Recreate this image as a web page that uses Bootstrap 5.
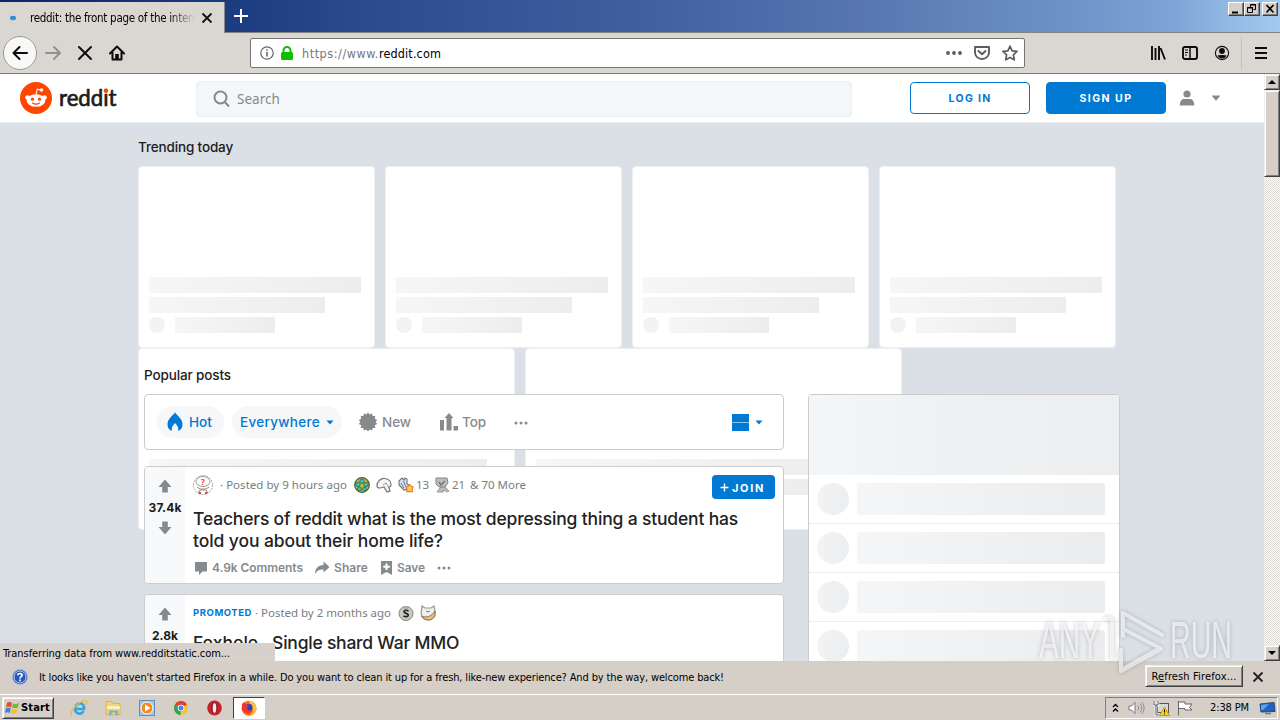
<!DOCTYPE html>
<html lang="en">
<head>
<meta charset="utf-8">
<title>reddit: the front page of the internet</title>
<link rel="stylesheet" href="https://cdn.jsdelivr.net/npm/bootstrap@5.3.0/dist/css/bootstrap.min.css">
<style>
  body { width: 1280px; height: 720px; overflow: hidden; background: #d5cfc8; color: #000;
    font: 11px/14px "DejaVu Sans Condensed", "DejaVu Sans", sans-serif; }
  svg { display: block; flex: none; }
  [data-w] { white-space: nowrap; display: inline-block; }
  /* fine spacing steps between Bootstrap's own */
  .s1 { margin-left: 1px; } .s2 { margin-left: 2px; } .s3 { margin-left: 3px; } .s5 { margin-left: 5px; }
  .s6 { margin-left: 6px; } .s7 { margin-left: 7px; } .s9 { margin-left: 9px; } .s11 { margin-left: 11px; }
  .s12 { margin-left: 12px; } .s13 { margin-left: 13px; } .s17 { margin-left: 17px; }
  .s19 { margin-left: 19px; } .s28 { margin-left: 28px; }
  .gap10 { gap: 10px; }
  /* window frame */
  .titlebar { height: 33px; background: linear-gradient(90deg, #0b256b 0, #1c3b80 18%, #2a4a8c 28%, #3f5f9f 50%, #5877b2 68%, #6f93c9 84%, #7fa6d6 92%, #a5caf0 100%); border-bottom: 1px solid #85837f; }
  .tabitem { width: 225px; height: 31px; margin-top: 2px; background: #dad6d1; border-right: 1px solid #8a8884; margin-bottom: -1px; padding-left: 9px; }
  .tabname { width: 165px; margin-left: 12px; overflow: hidden; font-size: 11.5px; -webkit-mask-image: linear-gradient(90deg, #000 84%, transparent); mask-image: linear-gradient(90deg, #000 84%, transparent); }
  .winbtns { padding: 2px 2px 0 0; }
  .winbtn { width: 16px; height: 14px; background: #d5cfc8; border: 1px solid; border-color: #fff #404040 #404040 #fff; box-shadow: inset -1px -1px #808080; }
  .toolbar { height: 41px; background: #dad6d1; border-bottom: 1px solid #7d7b78; padding: 0 12px 0 3px; }
  .backbtn { width: 34px; height: 34px; background: #f8f8f7; border: 1px solid #9c9a96; border-radius: 50%; }
  .urlbox { width: 775px; height: 30px; margin-left: 125px; background: #fff; border: 1px solid #777571; border-radius: 2px; padding: 0 6px 0 9px; font-size: 12.5px; }
  .addr { padding-top: 1px; }
  .dim { color: #77767a; }
  .vsep { width: 1px; height: 32px; background: #c3bfba; }
  /* page */
  .viewport { height: 587px; }
  .rd { background: #dae0e6; font-family: Inter, "Noto Sans", sans-serif; color: #1c1c1c; overflow: hidden; }
  .rdhead { height: 49px; background: #fff; border-bottom: 1px solid #edeff1; padding: 0 43px 0 20px; }
  .wordmark { margin-left: 6px; }
  .searchbox { width: 656px; height: 36px; margin: 2px 0 0 76px; background: #f4f7fa; border: 1px solid #eceff2; border-radius: 4px; padding-left: 16px; color: #878a8c; font: 13.5px/18px "Noto Sans", sans-serif; }
  .hbtn { width: 120px; height: 32px; padding-top: 1px; border: 1px solid #0079d3; border-radius: 4px; font-size: 10.5px; font-weight: 700; }
  .blue { color: #0079d3; }
  .bluebg { background: #0079d3; color: #fff; }
  .stack { display: grid; height: 538px; grid-template-columns: 1264px; }
  .stack > * { grid-area: 1 / 1; min-height: 0; }
  .heading { font-size: 13.5px; line-height: 18px; height: 20px; font-weight: 500; }
  .ghosts { padding: 15px 0 0 138px; }
  .ghostrow { margin-top: 8px; }
  .ghost { width: 237px; height: 182px; background: #fff; border: 1px solid #edeff1; border-radius: 4px; padding: 110px 0 0 10px; }
  .ghost.wide { width: 377px; }
  .gbar { height: 16px; margin-bottom: 4px; background: linear-gradient(90deg, #f6f6f6, #ededed); }
  .g90 { width: 90%; } .g75 { width: 75%; } .g100 { width: 100px; }
  .gdot { width: 16px; height: 16px; border-radius: 50%; background: #f2f2f2; margin-right: 10px; }
  .ginner { margin-right: -1px; width: calc(100% + 10px); }
  .feed { padding: 243px 0 0 144px; }
  .feedcol { width: 640px; }
  .box { background: #fff; border: 1px solid #ccc; border-radius: 4px; }
  .sortbar { height: 56px; margin-top: 8px; padding: 0 20px 0 12px; color: #878a8c; font-size: 13.5px; line-height: 20px; font-weight: 500; }
  .pill { height: 32px; border-radius: 16px; background: #f6f7f8; color: #0079d3; }
  .pillhot { width: 67px; padding-left: 10px; }
  .pillwhere { width: 110px; padding-left: 8px; }
  .post { height: 118px; margin-top: 16px; overflow: hidden; }
  .post + .post { margin-top: 10px; }
  .vote { width: 40px; padding-top: 12px; background: #f8f9fa; font-size: 12px; font-weight: 700; line-height: 16px; }
  .votes { margin: 7px 0 5px; }
  .meta { color: #787c7e; font: 11.5px/16px "Noto Sans", sans-serif; height: 20px; }
  .meta > span { margin-top: -1px; }
  .promo { font: 700 9.5px/14px Inter, sans-serif; }
  .ttl { margin-top: 9px; font-size: 17.5px; line-height: 22px; font-weight: 500; color: #222; }
  .dash { margin: 0 4px 0 2px; }
  .acts { margin-top: 8px; color: #878a8c; font-size: 12px; font-weight: 600; line-height: 16px; }
  .join { width: 63px; height: 24px; padding: 1px 0 0 8px; border-radius: 4px; font-size: 11px; font-weight: 700; }
  .side { width: 312px; height: 300px; margin: 28px 0 0 24px; overflow: hidden; }
  .sidetop { height: 80px; background: linear-gradient(90deg, #f4f7f9, #eef1f3 50%, #edeeef); }
  .siderow { height: 49px; padding-left: 8px; border-bottom: 1px solid #edeff1; }
  .sdot { width: 32px; height: 32px; border-radius: 50%; background: linear-gradient(90deg, #f3f3f3, #ebedef); }
  .sbar { width: 248px; height: 32px; margin-left: 8px; border-radius: 3px; background: linear-gradient(90deg, #f4f6f8, #ebecee); }
  /* scroll bar */
  .scroller { width: 16px; background: repeating-conic-gradient(#fff 0 25%, #dcd8d2 0 50%) 0 0 / 2px 2px; }
  .raised { background: #d5cfc8; border: 1px solid; border-color: #eee #404040 #404040 #eee; box-shadow: inset 1px 1px #fff, inset -1px -1px #808080; }
  .arrowbtn { height: 16px; }
  .thumb { height: 87px; }
  /* bottom bars */
  .status { width: 275px; height: 18px; left: 0; bottom: 0; background: #d6d1ca; padding: 4px 0 0 3px; }
  .notice { height: 32px; padding-left: 12px; }
  .msg { padding-top: 1px; }
  .refresh { width: 98px; height: 22px; margin-top: -2px; padding-top: 1px; }
  .closer { margin: 0 16px 0 9px; }
  .taskbar { height: 27px; box-shadow: inset 0 1px #d5cfc8, inset 0 2px #fff; padding: 2px 2px 0 2px; }
  .startbtn { width: 52px; height: 22px; font-weight: 700; padding-left: 2px; }
  .activetask { width: 32px; height: 22px; margin-left: 11px; background: #fff; border: 1px solid; border-color: #404040 #fff #fff #404040; }
  .tray { width: 173px; height: 22px; border: 1px solid; border-color: #808080 #fff #fff #808080; padding: 0 1px 0 6px; }
  .wm { left: 1030px; top: 604px; pointer-events: none; filter: drop-shadow(0 0 2px rgba(90,95,105,.6)); }
</style>
</head>
<body class="d-flex flex-column position-relative">

<header class="titlebar d-flex flex-shrink-0">
  <div class="tabitem d-flex align-items-center">
    <svg width="9" height="6"><ellipse cx="4" cy="3" rx="3" ry="2.200" fill="#2a8fe0"/></svg>
    <div class="tabname"><span data-w="168">reddit: the front page of the intern</span></div>
    <svg class="s6" width="12" height="12"><path d="M1.500 1.500l9 9m0-9l-9 9" stroke="#111" stroke-width="1.800"/></svg>
  </div>
  <svg width="14" height="14" class="align-self-center s9"><path d="M7 0v14M0 7h14" stroke="#fff" stroke-width="2"/></svg>
  <div class="winbtns ms-auto d-flex">
    <div class="winbtn"><svg width="14" height="12"><path d="M3 9.500h6" stroke="#000" stroke-width="2"/></svg></div>
    <div class="winbtn"><svg width="14" height="12"><path d="M5.500 4V1.500h5v5H8.500M5 2h6M2.500 4.500h5v5h-5zM2 5h6" fill="none" stroke="#000"/></svg></div>
    <div class="winbtn s2"><svg width="14" height="12"><path d="M3.500 2l7 7.500m0-7.500l-7 7.500" stroke="#000" stroke-width="1.700"/></svg></div>
  </div>
</header>

<nav class="toolbar d-flex align-items-center flex-shrink-0">
  <div class="backbtn d-flex align-items-center justify-content-center"><svg width="16" height="16"><path d="M15 8H1.500M7.500 2L1.500 8l6 6" fill="none" stroke="#0c0c0d" stroke-width="2" stroke-linecap="round" stroke-linejoin="round"/></svg></div>
  <svg width="16" height="16" class="ms-2"><path d="M1 8h13.500M9 2l6 6-6 6" fill="none" stroke="#92908d" stroke-width="1.900" stroke-linecap="round" stroke-linejoin="round"/></svg>
  <svg width="16" height="16" class="ms-3"><path d="M2 2l12 12M14 2L2 14" stroke="#0c0c0d" stroke-width="2" stroke-linecap="round"/></svg>
  <svg width="16" height="16" class="ms-3"><path d="M1 8.500L8 1.500l7 7M3.500 7.500V14.500h9V7.500" fill="none" stroke="#0c0c0d" stroke-width="2" stroke-linecap="round" stroke-linejoin="round"/><path d="M6.200 14.500V9h3.600v5.500z" fill="#0c0c0d"/></svg>
  <div class="urlbox d-flex align-items-center">
    <svg width="14" height="14"><circle cx="7" cy="7" r="6.200" fill="none" stroke="#66666a" stroke-width="1.200"/><path d="M7 6v4.500M7 3.200v1.600" stroke="#66666a" stroke-width="1.600"/></svg>
    <svg width="12" height="14" class="s7"><path d="M2.500 7V4.500a3.500 3.500 0 0 1 7 0V7" fill="none" stroke="#12bc00" stroke-width="2"/><rect y="6" width="12" height="8" rx="1.500" fill="#12bc00"/></svg>
    <span class="s9 addr"><span class="dim" data-w="77">https://www.</span><span data-w="62">reddit.com</span></span>
    <svg width="16" height="4" class="ms-auto"><g fill="#5c5b5f"><circle cx="2" cy="2" r="1.900"/><circle cx="8" cy="2" r="1.900"/><circle cx="14" cy="2" r="1.900"/></g></svg>
    <svg width="16" height="16" class="s12"><path d="M1 2h14v5.500a7 6.500 0 0 1-14 0z" fill="none" stroke="#5c5b5f" stroke-width="1.900" stroke-linejoin="round"/><path d="M4.500 6L8 9.300 11.500 6" fill="none" stroke="#5c5b5f" stroke-width="1.900" stroke-linecap="round" stroke-linejoin="round"/></svg>
    <svg width="16" height="16" class="s12"><path d="M8 1.200l2.100 4.600 4.900.6-3.600 3.400.9 5L8 12.400l-4.300 2.400.9-5L1 6.400l4.900-.6z" fill="none" stroke="#5c5b5f" stroke-width="1.700" stroke-linejoin="round"/></svg>
  </div>
  <div class="d-flex align-items-center gap-3 ms-auto">
    <svg width="16" height="16"><path d="M2 1v14M5.500 3v12M9 1v14M10.500 3l4.500 11.500" stroke="#0c0c0d" stroke-width="1.900"/></svg>
    <svg width="16" height="16"><rect x="1" y="2" width="14" height="12" rx="2" fill="none" stroke="#0c0c0d" stroke-width="1.900"/><path d="M8 2v12" stroke="#0c0c0d" stroke-width="1.500"/><path d="M3 5h3M3 7.500h3M3 10h2" stroke="#0c0c0d"/></svg>
    <svg width="16" height="16"><circle cx="8" cy="8" r="6.600" fill="none" stroke="#0c0c0d" stroke-width="1.100"/><circle cx="8" cy="6" r="2.900" fill="#0c0c0d"/><path d="M3.500 10.500c2-.8 7-.8 9 0-.8 2-2.500 3-4.500 3s-3.700-1-4.500-3z" fill="#0c0c0d"/></svg>
  </div>
  <div class="vsep s11"></div>
  <svg width="14" height="14" class="s12"><path d="M1 2h12M1 7h12M1 12h12" stroke="#0c0c0d" stroke-width="2"/></svg>
</nav>

<div class="viewport d-flex position-relative flex-shrink-0">
  <div class="rd flex-grow-1">
    <div class="rdhead d-flex align-items-center">
      <svg width="32" height="32"><circle cx="16" cy="16" r="16" fill="#ff4500"/><g fill="#fff"><ellipse cx="16" cy="18.500" rx="9.300" ry="6.300"/><circle cx="7.500" cy="15.500" r="2.300"/><circle cx="24.500" cy="15.500" r="2.300"/><circle cx="21.500" cy="8" r="1.800"/></g><path d="M16 12.500l1.200-5.300 4.300 1" fill="none" stroke="#fff" stroke-width="1.100"/><circle cx="12.500" cy="17.200" r="1.600" fill="#ff4500"/><circle cx="19.500" cy="17.200" r="1.600" fill="#ff4500"/><path d="M12.500 21c1.800 1.500 5.200 1.500 7 0" fill="none" stroke="#ff4500" stroke-width="1.100" stroke-linecap="round"/></svg>
      <svg width="62" height="32" class="wordmark"><text x="1" y="24" font-family="Lato, sans-serif" font-size="22.500" stroke="#1c1c1c" stroke-width=".7" fill="#1c1c1c" textLength="57.500" lengthAdjust="spacingAndGlyphs">reddit</text><circle cx="48" cy="8.700" r="2.300" fill="#ff4500"/></svg>
      <div class="searchbox d-flex align-items-center">
        <svg width="17" height="18"><circle cx="7.500" cy="7.500" r="6" fill="none" stroke="#878a8c" stroke-width="2"/><path d="M11.800 12l4.200 4.500" stroke="#878a8c" stroke-width="2"/></svg>
        <span class="s7" data-w="43">Search</span>
      </div>
      <div class="hbtn blue d-flex align-items-center justify-content-center ms-auto"><span data-w="43">LOG IN</span></div>
      <div class="hbtn bluebg d-flex align-items-center justify-content-center ms-3"><span data-w="53">SIGN UP</span></div>
      <svg width="16" height="16" class="s13"><circle cx="8" cy="4" r="3.600" fill="#878a8c"/><path d="M.8 15.500c0-4 1.500-6.500 4.200-6.500h6c2.700 0 4.200 2.500 4.200 6.500z" fill="#878a8c"/></svg>
      <svg width="10" height="6" class="ms-3"><path d="M.5.500h9L5 5.700z" fill="#878a8c"/></svg>
    </div>

    <div class="stack">
      <section class="ghosts">
        <div class="heading"><span data-w="95">Trending today</span></div>
        <div class="d-flex gap10 ghostrow" id="ghostRow"></div>
        <div class="d-flex gap10" id="ghostWide"></div>
      </section>

      <section class="feed d-flex align-items-start">
        <div class="feedcol">
          <div class="heading"><span data-w="87">Popular posts</span></div>
          <div class="box sortbar d-flex align-items-center">
            <div class="pill pillhot d-flex align-items-center">
              <svg width="16" height="20"><path d="M8 .5c3 4 7.500 6.500 7.500 12 0 3-1.500 5.500-4.500 6.500 1-3-.5-5.500-3-8-2.500 2.500-4 5-3 8-3-1-4.500-3.500-4.500-6.500C.5 7 5 4.500 8 .5z" fill="#0079d3"/></svg>
              <span class="s6" data-w="23">Hot</span></div>
            <div class="pill pillwhere d-flex align-items-center ms-2"><span data-w="80">Everywhere</span>
              <svg width="8" height="5" class="s6"><path d="M.5.500h7L4 4.500z" fill="#0079d3"/></svg></div>
            <svg width="20" height="20" class="ms-3"><path id="burst" fill="#878a8c"/></svg>
            <span class="ms-1" data-w="29">New</span>
            <svg width="20" height="20" class="s28"><path d="M1 8h4v10.500H1zM14.500 14H19v4.500h-4.500zM7.500 18.500V6H5.500L10 1l4.500 5h-2v12.500z" fill="#878a8c"/></svg>
            <span class="s3" data-w="24">Top</span>
            <svg width="14" height="5" class="s28"><g fill="#878a8c"><circle cx="2" cy="3" r="1.500"/><circle cx="7" cy="3" r="1.500"/><circle cx="12" cy="3" r="1.500"/></g></svg>
            <svg width="17" height="17" class="ms-auto"><path d="M0 0h17v17H0z" fill="#0079d3"/><path d="M0 8.500h17" stroke="#8cc4ee"/></svg>
            <svg width="8" height="5" class="s6"><path d="M.5.500h7L4 4.500z" fill="#0079d3"/></svg>
          </div>

          <article class="box post d-flex">
            <div class="vote d-flex flex-column align-items-center">
              <svg width="14" height="14"><path d="M7 .5L13.500 8H9.800v5.500H4.200V8H.5z" fill="#878a8c"/></svg>
              <span class="votes" data-w="33">37.4k</span>
              <svg width="14" height="14"><path d="M7 13.500L13.500 6H9.800V.5H4.200V6H.5z" fill="#878a8c"/></svg>
            </div>
            <div class="flex-grow-1 p-2">
              <div class="d-flex">
                <div class="meta d-flex align-items-center">
                  <svg width="20" height="20"><circle cx="10" cy="10" r="9.500" fill="#fff" stroke="#a9a9a9" stroke-dasharray="2 1"/><ellipse cx="10" cy="6.500" rx="7" ry="5" fill="#fff" stroke="#999"/><text x="10" y="9.500" font-size="8" font-weight="700" text-anchor="middle" fill="#f04020">?</text><path d="M4 12l3 2h6l3-2M5 18l2-3h6l2 3" stroke="#888" fill="none"/><path d="M6 18h2m4 0h2" stroke="#f04020" stroke-width="2"/></svg>
                  <span class="s7" data-w="127">· Posted by 9 hours ago</span>
                  <svg width="16" height="16" class="s7"><circle cx="8" cy="8" r="7.300" fill="#dfad35" stroke="#356146" stroke-width="1.200"/><g fill="#38c9b0" stroke="#2a6550" stroke-width=".8"><circle cx="8" cy="4.200" r="2.200"/><circle cx="4" cy="7.500" r="2.200"/><circle cx="12" cy="7.500" r="2.200"/><circle cx="5.500" cy="12" r="1.900"/><circle cx="10.500" cy="12" r="1.900"/></g></svg>
                  <svg width="16" height="16" class="s6"><path d="M1 9C1 4 5 1 9 1.500c4 .5 6 3.500 6 6.500 0 2-2 2-2.500 1.500L14 14l-3 1-3-5-4 1c-2 0-3-.5-3-2z" fill="#f6f6f6" stroke="#777" stroke-width="1.200"/><path d="M7 8l3-2 2 3" fill="none" stroke="#999"/></svg>
                  <svg width="16" height="16" class="s6"><path d="M1 4l3-3 2 2 1-2 2 1v5l2 1-2 4-3 1-5-5z" fill="#d5e2ea" stroke="#667488" stroke-width="1.100"/><path d="M3 6l3 5M5.500 4l2 5" stroke="#667488"/><path d="M11.500 7l1.300 2.200 2.500.6-1.200 2 .5 2.900H8.500l.5-2.900-1.200-2 2.500-.6z" fill="#ffc94a" stroke="#e66b13"/></svg>
                  <span class="s2" data-w="13">13</span>
                  <svg width="16" height="16" class="s5"><path d="M9 8l6 6-2 1-3-2-1 2H3l3-4z" fill="#bbb" stroke="#999"/><path d="M2 1h11l1 5-3 4H5L2 7z" fill="#bdbdbd" stroke="#858585"/><path d="M5 5l2 3 4-4" stroke="#777" fill="none" stroke-width="1.500"/></svg>
                  <span class="s2" data-w="13">21</span><span class="s5" data-w="56">&amp; 70 More</span>
                </div>
                <div class="join bluebg d-flex align-items-center ms-auto"><svg width="9" height="9"><path d="M4.500.5v8M.5 4.500h8" stroke="#fff" stroke-width="1.400"/></svg><span class="s3" data-w="33">JOIN</span></div>
              </div>
              <div class="ttl"><span data-w="545">Teachers of reddit what is the most depressing thing a student has</span><br><span data-w="250">told you about their home life?</span></div>
              <div class="acts d-flex align-items-center">
                <svg width="16" height="16"><path d="M2 2h12v9.500H9.500L6 15v-3.500H2z" fill="#878a8c"/></svg><span class="s3" data-w="91">4.9k Comments</span>
                <svg width="16" height="16" class="s11"><path d="M9.500 1.500L15.500 7l-6 5.500V9.500C5 9.300 3 10.500 1 14c0-5 3-9 8.500-9z" fill="#878a8c"/></svg><span class="ms-1" data-w="34">Share</span>
                <svg width="16" height="16" class="s11"><path d="M2 1h11v14l-5.500-3L2 15z" fill="#878a8c"/><path d="M7.500 3.500V10M4.300 6.700h6.500" stroke="#fff" stroke-width="2"/></svg><span class="s2" data-w="28">Save</span>
                <svg width="14" height="5" class="s12"><g fill="#878a8c"><circle cx="2" cy="2" r="1.500"/><circle cx="7" cy="2" r="1.500"/><circle cx="12" cy="2" r="1.500"/></g></svg>
              </div>
            </div>
          </article>

          <article class="box post d-flex">
            <div class="vote d-flex flex-column align-items-center">
              <svg width="14" height="14"><path d="M7 .5L13.500 8H9.800v5.500H4.200V8H.5z" fill="#878a8c"/></svg>
              <span class="votes" data-w="26">2.8k</span>
            </div>
            <div class="p-2">
              <div class="meta d-flex align-items-center">
                <span class="blue promo" data-w="59">PROMOTED</span>
                <span class="s3" data-w="136">· Posted by 2 months ago</span>
                <svg width="16" height="16" class="s7"><circle cx="8" cy="8.500" r="7" fill="#c9c9c5" stroke="#85857f"/><path d="M5 1h6L9.500 4h-3z" fill="#aaa"/><path d="M10.500 6C9 4.800 6 5 6 6.800c0 2 4.300 1.200 4.300 3.400C10.300 12 7 12 5.500 11" fill="none" stroke="#222" stroke-width="1.700"/></svg>
                <svg width="17" height="16" class="s6"><path d="M2 1l3 2h6l3-2 1 5c1 5-2 9-6.500 9S0 12 1.500 6z" fill="#f1efe9" stroke="#9b958a" stroke-width="1.200"/><path d="M2 11c4 2 9 1 13-5v4c-2 6-10 7-13 1z" fill="#e6c27c" stroke="#887a62"/><path d="M6 6l2 1 2-1" stroke="#777" fill="none"/></svg>
              </div>
              <div class="ttl"><span data-w="65">Foxhole</span><span class="dash">-</span><span data-w="187">Single shard War MMO</span></div>
            </div>
          </article>
        </div>

        <aside class="box side" id="side"><div class="sidetop"></div></aside>
      </section>
    </div>
  </div>

  <div class="scroller d-flex flex-column">
    <div class="raised arrowbtn"><svg width="14" height="14"><path d="M3 9h8L7 5z"/></svg></div>
    <div class="raised thumb"></div>
    <div class="raised arrowbtn mt-auto"><svg width="14" height="14"><path d="M3 5h8L7 9z"/></svg></div>
  </div>
  <div class="status position-absolute"><span data-w="227">Transferring data from www.redditstatic.com...</span></div>
</div>

<div class="notice d-flex align-items-center flex-shrink-0">
  <svg width="16" height="16"><circle cx="8" cy="8" r="7.500" fill="#2a55bb" stroke="#9cb3e4"/><circle cx="8" cy="8" r="6" fill="none" stroke="#dfe8fa" stroke-width=".8"/><path d="M5.800 6.300C6 3.800 10.300 4 10.100 6.300c-.1 1.400-2.100 1.400-2.100 3.200M8 10.500v1.800" fill="none" stroke="#fff" stroke-width="1.700"/></svg>
  <span class="s11 msg" data-w="685">It looks like you haven't started Firefox in a while. Do you want to clean it up for a fresh, like-new experience? And by the way, welcome back!</span>
  <div class="raised refresh d-flex align-items-center justify-content-center ms-auto"><span data-w="85">R<u>e</u>fresh Firefox...</span></div>
  <svg width="12" height="12" class="closer"><path d="M1.500 1.500l9 9m0-9l-9 9" stroke="#222" stroke-width="1.800"/></svg>
</div>

<footer class="taskbar d-flex align-items-center flex-shrink-0">
  <div class="raised startbtn d-flex align-items-center">
    <svg width="15" height="15"><path d="M2 3c2-1.500 4-1 5 0L6 7.500C4.500 6.500 3 6.500 1 7.500z" fill="#e8502a"/><path d="M8 3.500c2 1 4 .8 6-.5l-1.200 4.500c-2 1-4 1-5.800 0z" fill="#74b83a"/><path d="M.8 8.500c2-1 3.500-1 5 0L4.700 13c-1.500-1-3-1-5 0z" fill="#3d86d8"/><path d="M6.800 8.800c2 1 4 1 5.800 0L11.500 13c-2 1-4 1-5.800 0z" fill="#f6c22c"/></svg>
    <span class="s1" data-w="29">Start</span>
  </div>
  <svg width="18" height="18" class="ms-3"><path d="M13.500 12c-1 2-3 3-5 2.500-5-1.500-4-9 .5-10 4-.8 5.500 3 5 5.500H5" fill="none" stroke="#35a5e5" stroke-width="2.600"/><path d="M1.500 16.500C-1 12 11 0 16.500 2c1 1 0 2.500-1 4" fill="none" stroke="#edbb3c" stroke-width="1.300"/></svg>
  <svg width="17" height="18" class="s17"><path d="M1 2.500h6l1 2h7v11H1z" fill="#f1d477" stroke="#d8b355"/><path d="M2 7h13v3H2z" fill="#fbefbd"/><path d="M4 16.500v-5h9v5h-2.500v-3h-4v3z" fill="#6bb5e7"/></svg>
  <svg width="16" height="16" class="s17"><rect x=".5" y=".5" width="15" height="15" fill="#9dc9ed" stroke="#5c8fbb"/><circle cx="8" cy="8" r="6" fill="#f58b1f" stroke="#fff"/><path d="M6 4.500v7L11.500 8z" fill="#fff"/></svg>
  <svg width="14" height="14" class="s19"><circle cx="7" cy="7" r="7" fill="#f5c52c"/><path d="M7 7L.9 3.500A7 7 0 0 1 13.100 3.500z" fill="#df4232"/><path d="M7 7L.9 3.500A7 7 0 0 0 6.500 14z" fill="#30a350"/><circle cx="7" cy="7" r="3.300" fill="#fff"/><circle cx="7" cy="7" r="2.500" fill="#4683ea"/></svg>
  <svg width="15" height="16" class="s19"><ellipse cx="7.500" cy="8" rx="7.300" ry="7.500" fill="#c8202a"/><ellipse cx="7.500" cy="8" rx="2.400" ry="5.500" fill="#f5e9e8" stroke="#7d1018"/></svg>
  <div class="activetask d-flex align-items-center justify-content-center"><svg width="16" height="16"><circle cx="8" cy="8.300" r="7.500" fill="#ff6a1a"/><path d="M8 .5c5 1 8 5 7.200 9.500C14 14 11 16 8 15.800c4-2 5-5 3.500-8.300C10 5 8 4 8 .5z" fill="#ffc62e"/><circle cx="7.800" cy="7.500" r="3.700" fill="#3b3fbb"/><path d="M1 4l2-2 1 2 4 1-2 2 1 3 4 1c-2 3-8 3-10-2z" fill="#f0342f"/></svg></div>
  <div class="tray d-flex align-items-center ms-auto">
    <svg width="8" height="10"><path d="M1 4l2.500-2.500L6 4M1 8.500L3.500 6 6 8.500" fill="none" stroke="#000" stroke-width="1.300"/></svg>
    <svg width="17" height="14" class="ms-2"><path d="M1 5h2.500L7 1.500v11L3.500 9H1z" fill="#fff" stroke="#777"/><path d="M9.500 4.500c1.500 1.500 1.500 3.500 0 5M11.500 2.500c3 3 3 6 0 9M13.500 1c3.500 4 3.500 8 0 12" fill="none" stroke="#888"/></svg>
    <svg width="17" height="16" class="ms-2"><rect x="4.500" y="3.500" width="11" height="9" fill="#d8d8d8" stroke="#555"/><path d="M1 1v4h4V1M3 5v10h3" stroke="#fff" stroke-width="2.500" fill="none"/><path d="M1 1v4h4V1M3 5v10h3" stroke="#555" fill="none"/><path d="M11.500 7l5 8.500h-10z" fill="#f9d616" stroke="#c79a10"/><path d="M11.500 9.500v3M11.500 13.500v1" stroke="#000"/></svg>
    <svg width="16" height="16" class="s7"><path d="M1.500 1v14.500M2 2h6v2h7l-2.500 3.500L15 10H8V8.500H2" fill="#fff" stroke="#666"/></svg>
    <span class="s17" data-w="39">2:38 PM</span>
    <svg width="17" height="14" class="ms-auto"><path d="M1 3l14-1.500 1 9-14 .5z" fill="#1f62c4" stroke="#27466e"/><path d="M2 4l8-1-6 6H2z" fill="#5fa2ee"/><path d="M6 12.500h6" stroke="#777" stroke-width="1.500"/></svg>
  </div>
</footer>

<svg class="wm position-absolute" width="214" height="76">
  <g fill="#fff" fill-opacity=".62" font-family="Liberation Sans Narrow, Liberation Sans, sans-serif" font-size="51">
    <text x="9" y="54" textLength="61" lengthAdjust="spacingAndGlyphs">ANY</text>
    <text x="140" y="54" textLength="62" lengthAdjust="spacingAndGlyphs">RUN</text>
  </g>
  <path d="M82 54V20q0-8-6-5M93 32V9l39 22M93 25l37 19-37 21M91 46v21l40-22" fill="none" stroke="#fff" stroke-opacity=".62" stroke-width="4" stroke-linecap="round" stroke-linejoin="round"/>
</svg>

<script src="https://cdn.jsdelivr.net/npm/bootstrap@5.3.0/dist/js/bootstrap.bundle.min.js"></script>
<script>
  // placeholder cards
  const ghost = cls => `<div class="ghost ${cls}"><div class="ginner"><div class="gbar g90"></div><div class="gbar g75"></div><div class="d-flex"><div class="gdot"></div><div class="gbar g100"></div></div></div></div>`;
  ghostRow.innerHTML = ghost('').repeat(4);
  ghostWide.innerHTML = ghost('wide').repeat(2);
  side.insertAdjacentHTML('beforeend', '<div class="siderow d-flex align-items-center"><div class="sdot"></div><div class="sbar"></div></div>'.repeat(5));
  // 14-point burst for "New"
  burst.setAttribute('d', 'M' + Array.from({length: 28}, (_, i) => {
    const r = i % 2 ? 7.6 : 9.4, a = i * Math.PI / 14;
    return (10 + r * Math.sin(a)).toFixed(1) + ' ' + (10 - r * Math.cos(a)).toFixed(1);
  }).join('L') + 'z');
  // track each label to its set width
  document.querySelectorAll('[data-w]').forEach(el => {
    const n = el.textContent.length, w = +el.dataset.w;
    el.style.letterSpacing = ((w - el.getBoundingClientRect().width) / n).toFixed(3) + 'px';
  });
</script>
</body>
</html>
